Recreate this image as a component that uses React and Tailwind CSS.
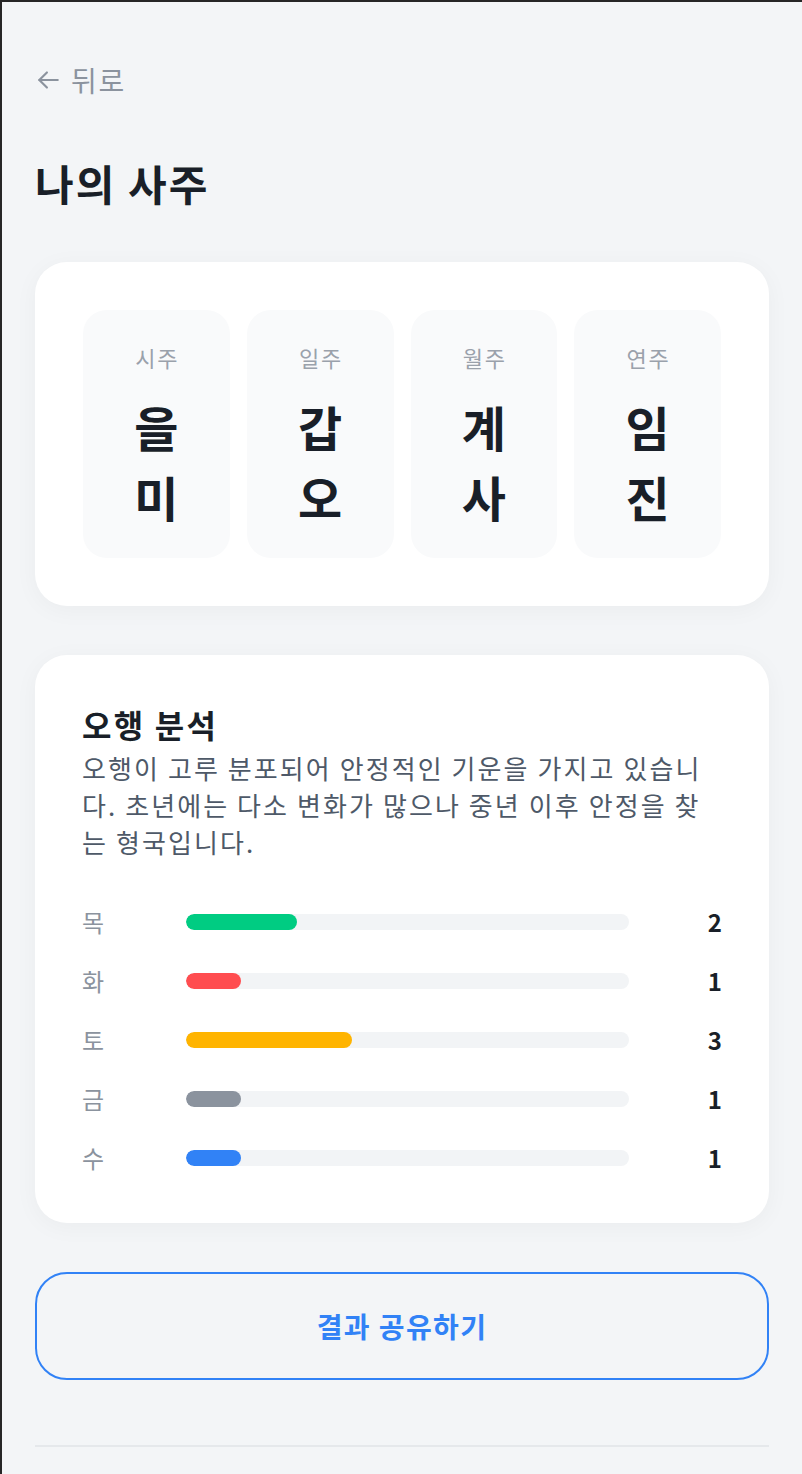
import React from "react";

const pillars = [
  { label: "시주", top: "을", bottom: "미" },
  { label: "일주", top: "갑", bottom: "오" },
  { label: "월주", top: "계", bottom: "사" },
  { label: "연주", top: "임", bottom: "진" },
];

const elements = [
  { name: "목", count: 2, color: "bg-[#00cc82]" },
  { name: "화", count: 1, color: "bg-[#ff4d50]" },
  { name: "토", count: 3, color: "bg-[#ffb400]" },
  { name: "금", count: 1, color: "bg-[#8b939e]" },
  { name: "수", count: 1, color: "bg-[#3182f6]" },
];

const total = elements.reduce((sum, el) => sum + el.count, 0);

const App = () => {
  return (
    <div
      className="min-h-[1474px] bg-[#f3f5f7] border-t-2 border-l-2 border-[#262626] px-[33px] pt-[58px] pb-[28px] tracking-[0.06em]"
      style={{ fontFamily: '"Noto Sans CJK KR", "Noto Sans", sans-serif' }}
    >
      {/* back */}
      <button className="flex items-center gap-[10px] text-[28px] leading-[40px] text-[#8b939e] tracking-[0.06em]">
        <svg
          width="26"
          height="26"
          viewBox="0 0 24 24"
          fill="none"
          stroke="currentColor"
          strokeWidth="2"
          strokeLinecap="round"
          strokeLinejoin="round"
        >
          <path d="M21 12H4" />
          <path d="M11 5l-7 7 7 7" />
        </svg>
        <span>뒤로</span>
      </button>

      <h1 className="mt-[58px] text-[42px] leading-[50px] font-bold text-[#191f28] tracking-[0.05em]">
        나의 사주
      </h1>

      {/* pillars */}
      <section className="mt-[54px] bg-white rounded-[32px] shadow-[0_4px_24px_rgba(0,0,0,0.04)] p-[48px]">
        <div className="grid grid-cols-4 gap-[17px]">
          {pillars.map((p) => (
            <div
              key={p.label}
              className="bg-[#f9fafb] rounded-[24px] pt-[32px] pb-[27px] flex flex-col items-center"
            >
              <div className="text-[22px] leading-[31px] text-[#9aa1ab] tracking-[0.08em] pl-[0.08em]">
                {p.label}
              </div>
              <div className="mt-[18px] flex flex-col items-center text-[48px] leading-[70px] font-bold text-[#191f28] tracking-normal">
                <span>{p.top}</span>
                <span>{p.bottom}</span>
              </div>
            </div>
          ))}
        </div>
      </section>

      {/* five elements */}
      <section className="mt-[49px] bg-white rounded-[32px] shadow-[0_4px_24px_rgba(0,0,0,0.04)] px-[47px] pt-[48px] pb-[48px]">
        <h2 className="text-[32px] leading-[42px] font-bold text-[#191f28] tracking-[0.07em]">
          오행 분석
        </h2>
        <p className="mt-[4px] text-[26px] leading-[37px] text-[#4e5968] tracking-[0.08em]">
          오행이 고루 분포되어 안정적인 기운을 가지고 있습니다. 초년에는 다소
          변화가 많으나 중년 이후 안정을 찾는 형국입니다.
        </p>

        <div className="mt-[44px] flex flex-col gap-[24px]">
          {elements.map((el) => (
            <div key={el.name} className="flex items-center h-[35px]">
              <span className="w-[104px] text-[24px] leading-[35px] text-[#8b939e]">
                {el.name}
              </span>
              <div className="flex-1 h-[16px] rounded-full bg-[#f2f4f6] overflow-hidden">
                <div
                  className={`h-full rounded-full ${el.color}`}
                  style={{ width: `${(el.count / total) * 100}%` }}
                />
              </div>
              <span className="w-[93px] text-right text-[24px] leading-[35px] font-semibold text-[#191f28] tracking-normal">
                {el.count}
              </span>
            </div>
          ))}
        </div>
      </section>

      {/* share */}
      <button className="mt-[49px] w-full h-[108px] rounded-[32px] border-2 border-[#3182f6] text-[28px] font-bold text-[#3182f6] tracking-[0.05em]">
        결과 공유하기
      </button>

      <div className="mt-[65px] h-[2px] bg-[#e5e8eb]" />
    </div>
  );
};

export default App;
